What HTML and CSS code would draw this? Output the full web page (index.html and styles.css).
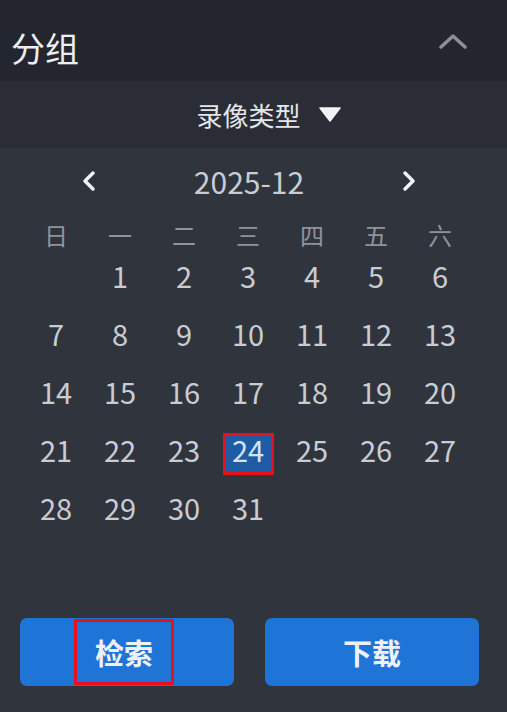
FILE: index.html
```html
<!DOCTYPE html>
<html lang="zh-CN">
<head>
<meta charset="utf-8">
<title>分组</title>
<link rel="stylesheet" href="styles.css">
</head>
<body>
<div class="panel">
  <div class="header">
    <span class="title">分组</span>
    <svg class="collapse" width="28" height="16" viewBox="0 0 28 16"><polyline points="2,14 14,3 26,14" fill="none" stroke="#8b8f97" stroke-width="3.5" stroke-linecap="round" stroke-linejoin="round"/></svg>
  </div>
  <div class="subbar">
    <span class="subtitle">录像类型</span>
    <svg class="caret" width="22" height="15" viewBox="0 0 22 15"><polygon points="1,1 21,1 11,14" fill="#f2f3f5" stroke="#f2f3f5" stroke-width="1.5" stroke-linejoin="round"/></svg>
  </div>
  <div class="calendar">
    <div class="month-row">
      <svg class="nav" width="14" height="22" viewBox="0 0 14 22"><polyline points="11,3 3,11 11,19" fill="none" stroke="#f4f5f7" stroke-width="3.5" stroke-linecap="round" stroke-linejoin="round"/></svg>
      <span class="month">2025-12</span>
      <svg class="nav" width="14" height="22" viewBox="0 0 14 22"><polyline points="3,3 11,11 3,19" fill="none" stroke="#f4f5f7" stroke-width="3.5" stroke-linecap="round" stroke-linejoin="round"/></svg>
    </div>
    <div class="weekdays">
      <span>日</span><span>一</span><span>二</span><span>三</span><span>四</span><span>五</span><span>六</span>
    </div>
    <div class="days">
      <span></span><span>1</span><span>2</span><span>3</span><span>4</span><span>5</span><span>6</span>
      <span>7</span><span>8</span><span>9</span><span>10</span><span>11</span><span>12</span><span>13</span>
      <span>14</span><span>15</span><span>16</span><span>17</span><span>18</span><span>19</span><span>20</span>
      <span>21</span><span>22</span><span>23</span><span><b class="selected">24</b></span><span>25</span><span>26</span><span>27</span>
      <span>28</span><span>29</span><span>30</span><span>31</span><span></span><span></span><span></span>
    </div>
    <div class="actions">
      <button class="btn"><span class="btn-label marked">检索</span></button>
      <button class="btn"><span class="btn-label">下载</span></button>
    </div>
  </div>
</div>
</body>
</html>
```

FILE: styles.css
```css
html, body {
  margin: 0;
  padding: 0;
  background: #2f343d;
}
body {
  width: 507px;
  height: 712px;
  overflow: hidden;
  font-family: "Noto Sans CJK SC", "Noto Sans", sans-serif;
}
.panel {
  display: flex;
  flex-direction: column;
  height: 712px;
}
.header {
  height: 81px;
  background: #23262e;
  display: flex;
  align-items: center;
  justify-content: space-between;
  padding: 0 40px 0 11px;
}
.title {
  font-size: 34px;
  line-height: 40px;
  color: #eceef1;
  padding-top: 14px;
}
.collapse {
  display: block;
}
.subbar {
  height: 67px;
  background: #2a2d36;
  display: flex;
  align-items: center;
  justify-content: center;
  padding-left: 30px;
}
.subtitle {
  font-size: 26px;
  line-height: 30px;
  color: #e4e6ea;
}
.caret {
  display: block;
  margin-left: 18px;
}
.calendar {
  flex: 1;
  background: #2f343d;
}
.month-row {
  display: flex;
  align-items: center;
  justify-content: center;
  gap: 98px;
  height: 36px;
  padding-top: 15px;
  padding-right: 9px;
  margin-bottom: 20px;
}
.nav {
  display: block;
}
.month {
  font-size: 30px;
  line-height: 36px;
  color: #c9cdd3;
}
.weekdays, .days {
  display: grid;
  grid-template-columns: repeat(7, 64px);
  margin-left: 24px;
}
.weekdays span {
  height: 32px;
  line-height: 32px;
  text-align: center;
  font-size: 24px;
  color: #8f949c;
}
.days span {
  height: 58px;
  box-sizing: border-box;
  padding-bottom: 10px;
  display: flex;
  align-items: center;
  justify-content: center;
  font-size: 29px;
  color: #c9cdd3;
}
.selected {
  display: flex;
  align-items: center;
  justify-content: center;
  width: 51px;
  height: 42px;
  margin-top: 10px;
  padding-bottom: 10px;
  box-sizing: border-box;
  border: 3px solid #e8101a;
  background: #1f5ba3;
  color: #d4e3f6;
  font-weight: normal;
}
.actions {
  display: flex;
  gap: 31px;
  padding: 0 28px 0 20px;
  margin-top: 77px;
}
.btn {
  width: 214px;
  height: 68px;
  border: none;
  border-radius: 7px;
  background: #1f74d8;
  display: flex;
  align-items: center;
  justify-content: center;
  padding: 0;
  font-family: inherit;
  cursor: pointer;
}
.btn-label {
  font-size: 29px;
  font-weight: bold;
  color: #eef2f8;
  display: flex;
  align-items: center;
  justify-content: center;
  width: 100px;
  height: 66px;
  box-sizing: border-box;
}
.btn-label.marked {
  border: 3px solid #e8101a;
  margin-right: 6px;
}
```
